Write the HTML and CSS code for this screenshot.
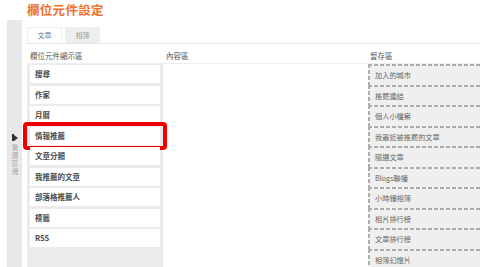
FILE: index.html
```html
<!DOCTYPE html>
<html lang="zh-Hant">
<head>
    <meta charset="UTF-8">
    <title>欄位元件設定</title>
    <link rel="stylesheet" href="styles.css">
</head>
<body>
    <h1 class="page-title">欄位元件設定</h1>
    <div class="layout">
        <div class="sidebar">
            <span class="sidebar-icon"><span class="bar"></span><span class="tri"></span></span>
            <span class="sidebar-text">管理區塊</span>
        </div>
        <div class="panel">
            <div class="tabs">
                <div class="tab active">文章</div>
                <div class="tab">相簿</div>
            </div>
            <div class="columns">
                <div class="col-head">欄位元件顯示區</div>
                <div class="col-head">內容區</div>
                <div class="col-head">暫存區</div>

                <div class="col col-show">
                    <div class="widget">搜尋</div>
                    <div class="widget">作家</div>
                    <div class="widget">月曆</div>
                    <div class="widget marked">情報推薦</div>
                    <div class="widget">文章分類</div>
                    <div class="widget">我推薦的文章</div>
                    <div class="widget">部落格推薦人</div>
                    <div class="widget">標籤</div>
                    <div class="widget">RSS</div>
                </div>
                <div class="col col-content"></div>
                <div class="col col-store">
                    <div class="stored">加入的城市</div>
                    <div class="stored">推薦連結</div>
                    <div class="stored">個人小檔案</div>
                    <div class="stored">我最近被推薦的文章</div>
                    <div class="stored">隨選文章</div>
                    <div class="stored">Blogs聯播</div>
                    <div class="stored">小時鐘相簿</div>
                    <div class="stored">相片排行榜</div>
                    <div class="stored">文章排行榜</div>
                    <div class="stored">相簿幻燈片</div>
                    <div class="stored"></div>
                </div>
            </div>
        </div>
    </div>
</body>
</html>
```

FILE: styles.css
```css
* {
    margin: 0;
    padding: 0;
    box-sizing: border-box;
}

body {
    font-family: "Noto Sans CJK TC", "Noto Sans", sans-serif;
    background: #fff;
    color: #444;
    height: 267px;
    overflow: hidden;
}

.page-title {
    font-size: 12.5px;
    line-height: 20px;
    height: 20px;
    font-weight: bold;
    color: #f0702e;
    padding-left: 27px;
    letter-spacing: 0.3px;
}

.layout {
    display: flex;
    height: 247px;
}

.sidebar {
    width: 15px;
    margin-left: 7px;
    background: #e8e8e8;
    display: flex;
    flex-direction: column;
    align-items: center;
    padding-top: 114px;
}

.sidebar-icon {
    display: flex;
    align-items: center;
    height: 7px;
    margin-left: 1px;
}

.sidebar-icon .bar {
    width: 2px;
    height: 7px;
    background: #333;
}

.sidebar-icon .tri {
    width: 0;
    height: 0;
    border-top: 3.5px solid transparent;
    border-bottom: 3.5px solid transparent;
    border-left: 4px solid #333;
}

.sidebar-text {
    writing-mode: vertical-rl;
    font-size: 6.5px;
    line-height: 7px;
    color: #a5a5a5;
    margin-top: 3px;
    letter-spacing: 1.5px;
}

.panel {
    flex: 1;
    margin-left: 5px;
    padding-top: 7px;
    min-width: 0;
}

.tabs {
    display: flex;
    gap: 3px;
    height: 17px;
    border-bottom: 1px solid #e6e6e6;
}

.tab {
    width: 35px;
    height: 16px;
    font-size: 7px;
    line-height: 16px;
    text-align: center;
    background: #eeeeee;
    color: #999;
}

.tab.active {
    background: #fff;
    color: #5f7fa6;
    border: 1px solid #eeeeee;
    border-bottom: none;
    line-height: 15px;
}

.columns {
    display: grid;
    grid-template-columns: 136px 205px 1fr;
    grid-template-rows: 20px auto;
}

.col-head {
    font-size: 7.5px;
    line-height: 18px;
    padding-top: 3px;
    padding-left: 3px;
    color: #555;
    border-bottom: 1px solid #eeeeee;
}

.col-head:nth-child(3) {
    padding-left: 2px;
}

.col {
    height: 210px;
}

.col-show {
    background: #ebebeb;
    padding: 1px 3px 0 3px;
    display: flex;
    flex-direction: column;
    gap: 2.5px;
}

.widget {
    position: relative;
    background: #fff;
    height: 18px;
    font-size: 7.5px;
    line-height: 18px;
    padding-left: 5px;
    color: #4a4a4a;
    font-weight: bold;
}

.widget.marked::after {
    content: "";
    position: absolute;
    top: -5px;
    bottom: -5px;
    left: -7px;
    right: -7px;
    border: 4px solid #ee0000;
    border-radius: 4px;
}

.col-content {
    background: #fff;
}

.col-store {
    overflow: hidden;
}

.stored {
    height: 20.5px;
    padding: 2px 0 0 7px;
    font-size: 7.2px;
    line-height: 18px;
    color: #666;
    background:
        repeating-linear-gradient(to right, #adadad 0 4px, #f4f4f4 4px 6px) top left / 100% 2px no-repeat,
        repeating-linear-gradient(to bottom, #adadad 0 4px, #f4f4f4 4px 6px) top left / 2px 100% no-repeat,
        #efefef;
}
```
